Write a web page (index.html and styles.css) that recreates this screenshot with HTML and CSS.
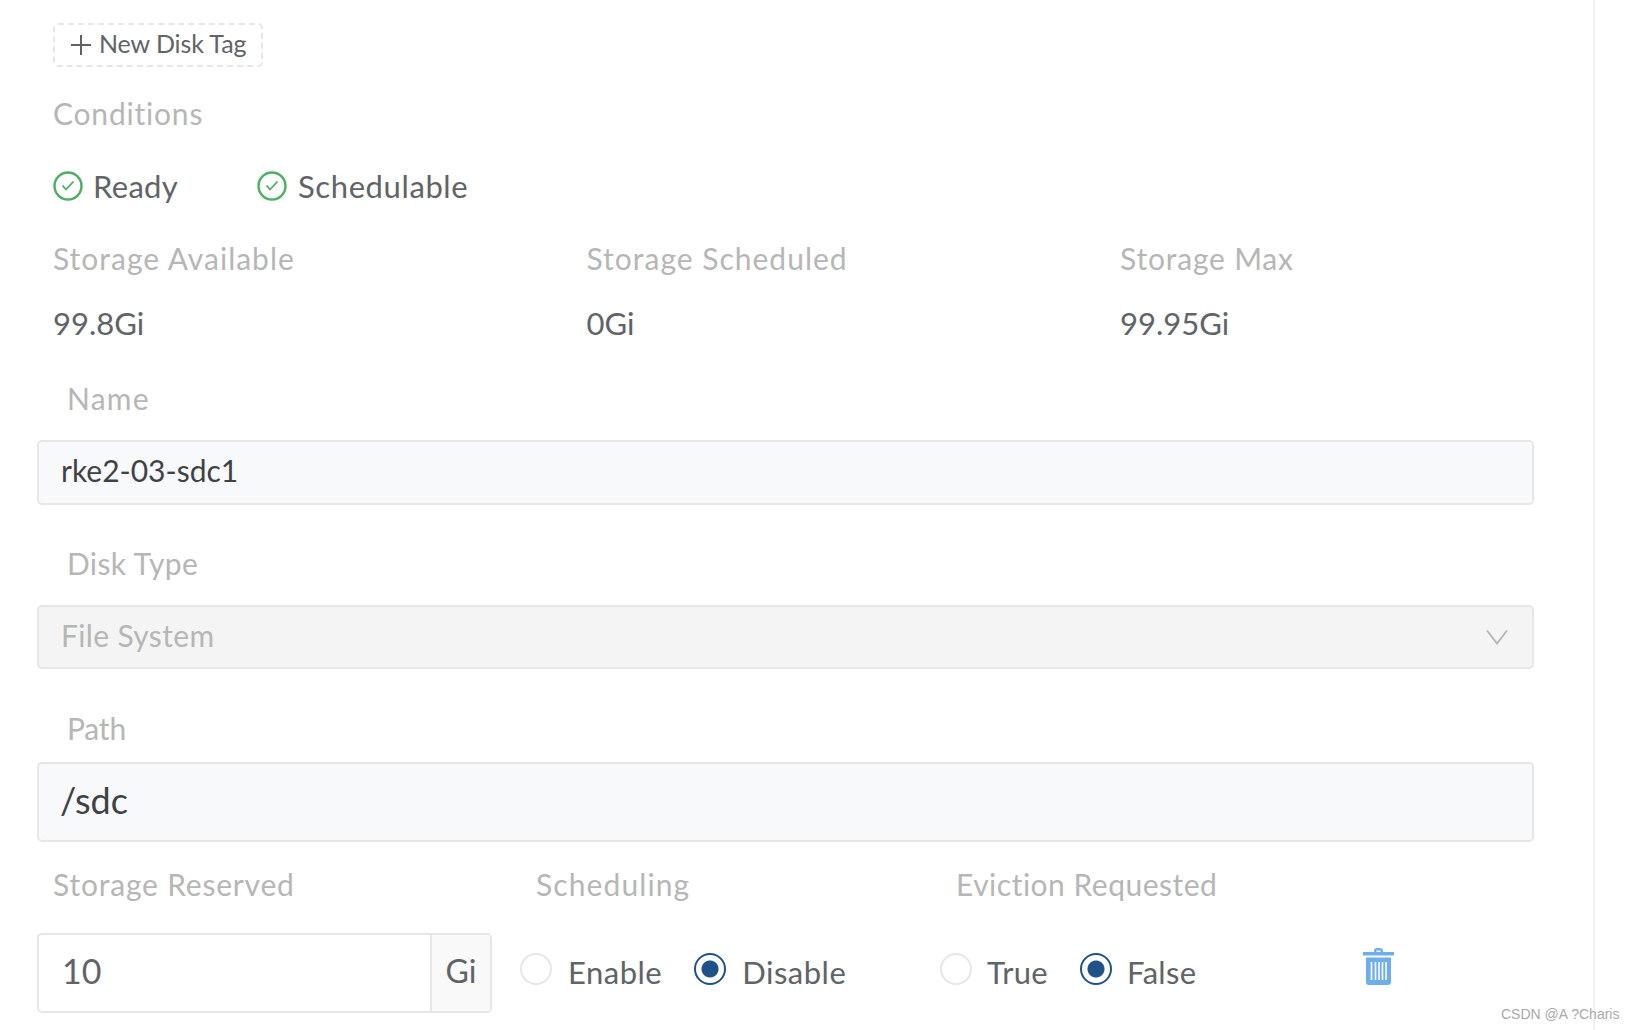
FILE: index.html
```html
<!DOCTYPE html>
<html lang="en">
<head>
<meta charset="utf-8">
<title>Disk settings</title>
<link rel="stylesheet" href="styles.css">
</head>
<body>
<main class="page">
  <div class="inset">
    <button class="tag-btn" type="button">
      <svg class="plus" width="20" height="20" viewBox="0 0 20 20"><path d="M10 0v20M0 10h20" stroke="#5f6266" stroke-width="2" fill="none"/></svg>
      <span>New Disk Tag</span>
    </button>
    <div class="label conditions-label">Conditions</div>
    <div class="conditions">
      <div class="condition">
        <svg width="30" height="30" viewBox="0 0 30 30"><circle cx="15" cy="15" r="13.5" fill="none" stroke="#4caf64" stroke-width="2.400"/><path d="M9.500 14.500l3.500 4 7.500-8" fill="none" stroke="#4caf64" stroke-width="1.800"/></svg>
        <span>Ready</span>
      </div>
      <div class="condition">
        <svg width="30" height="30" viewBox="0 0 30 30"><circle cx="15" cy="15" r="13.5" fill="none" stroke="#4caf64" stroke-width="2.400"/><path d="M9.500 14.500l3.500 4 7.500-8" fill="none" stroke="#4caf64" stroke-width="1.800"/></svg>
        <span class="wide">Schedulable</span>
      </div>
    </div>
    <div class="stats">
      <div class="stat"><div class="label stat-label">Storage Available</div><div class="value">99.8Gi</div></div>
      <div class="stat"><div class="label stat-label">Storage Scheduled</div><div class="value">0Gi</div></div>
      <div class="stat"><div class="label">Storage Max</div><div class="value">99.95Gi</div></div>
    </div>
  </div>

  <div class="field-label name-label">Name</div>
  <div class="control short filled"><span class="control-text">rke2-03-sdc1</span></div>
  <div class="field-label type-label">Disk Type</div>
  <div class="control short disabled">
    <span class="control-text">File System</span>
    <svg width="22" height="16" viewBox="0 0 22 16"><path d="M1 1.500l10 13 10-13" fill="none" stroke="#b4b4b4" stroke-width="1.800"/></svg>
  </div>
  <div class="field-label path-label">Path</div>
  <div class="control tall filled"><span class="control-text">/sdc</span></div>

  <div class="settings">
    <div class="reserved">
      <div class="label">Storage Reserved</div>
      <div class="input-group">
        <div class="number">10</div>
        <div class="unit">Gi</div>
      </div>
    </div>
    <div class="scheduling">
      <div class="label">Scheduling</div>
      <div class="radios">
        <span class="radio"></span><span class="radio-text">Enable</span>
        <span class="radio on"></span><span class="radio-text">Disable</span>
      </div>
    </div>
    <div class="eviction">
      <div class="label">Eviction Requested</div>
      <div class="radios">
        <span class="radio"></span><span class="radio-text">True</span>
        <span class="radio on"></span><span class="radio-text">False</span>
      </div>
    </div>
    <svg class="trash" width="31" height="37" viewBox="0 0 31 37"><path fill="#6eaeee" d="M11 4V3a3 3 0 0 1 3-3h3a3 3 0 0 1 3 3v1h11v3.500H0V4zM13.500 4h4V2.500h-4zM3 9.500h25V34a3 3 0 0 1-3 3H6a3 3 0 0 1-3-3z"/><path stroke="#fff" stroke-width="1.600" d="M8.500 14v18M12.500 14v18M16 14v18M19.500 14v18M23 14v18" fill="none"/></svg>
  </div>
</main>
<div class="watermark">CSDN @A ?Charis</div>
</body>
</html>
```
FILE: styles.css
```css
* { box-sizing: border-box; }
html, body { margin: 0; padding: 0; background: #fff; }
body { height: 1030px; overflow: hidden; position: relative; font-family: Lato, "Open Sans", sans-serif; color: #606367; }
.page { width: 1595px; height: 1030px; padding: 23px 59px 0 37px; border-right: 2px solid #f1f1f1; }
.inset { padding-left: 16px; }
.label, .field-label { font-size: 30px; line-height: 33px; padding-bottom: 3px; color: #b6b6b6; letter-spacing: .8px; }
.stat-label { letter-spacing: 1px; }
.tag-btn { display: flex; align-items: center; gap: 8px; width: 210px; height: 44px; padding: 0 0 0 16px; background: #fff; border: 2px dashed #e6e6e6; border-radius: 5px; font: 25px/1 Lato, sans-serif; color: #606367; }
.tag-btn span { padding-bottom: 4px; letter-spacing: -.1px; }
.conditions-label { margin-top: 30px; }
.conditions { display: flex; margin-top: 35px; gap: 79px; height: 36px; }
.condition { display: flex; align-items: center; gap: 10px; font-size: 31px; letter-spacing: .3px; }
.wide { margin-left: 1px; letter-spacing: .6px; }
.stats { display: grid; grid-template-columns: repeat(3, 533.500px); margin-top: 38px; }
.value { margin-top: 28px; font-size: 31px; line-height: 35px; padding-bottom: 1px; }
.field-label { padding-left: 30px; }
.name-label { margin-top: 40px; letter-spacing: 1.200px; }
.type-label { margin-top: 42px; letter-spacing: .35px; }
.path-label { margin-top: 43px; letter-spacing: -.2px; }
.control { display: flex; align-items: center; justify-content: space-between; margin-top: 22px; padding: 0 24px 0 22px; border: 2px solid #e6e6e6; border-radius: 5px; font-size: 30px; }
.control-text { padding-bottom: 5px; }
.short { height: 65px; }
.tall { height: 80px; margin-top: 14px; font-size: 36px; padding-left: 21px; }
.filled { background: #f8f9fb; color: #3f4245; }
.disabled { height: 64px; background: #f4f4f4; color: #b6b6b6; letter-spacing: .35px; }
.settings { display: flex; position: relative; margin-top: 26px; }
.reserved { width: 455px; }
.reserved .label { padding-left: 16px; }
.input-group { display: flex; height: 80px; margin-top: 29px; border: 2px solid #e6e6e6; border-radius: 5px; font-size: 34px; }
.number { flex: 1; padding-left: 23px; line-height: 71px; }
.unit { width: 60px; border-left: 2px solid #e6e6e6; background: #f9f9f9; font-size: 32px; line-height: 71px; text-align: center; }
.scheduling, .eviction { flex: none; }
.scheduling { margin-left: 28px; width: 420px; }
.scheduling .label { padding-left: 16px; letter-spacing: 1.100px; }
.eviction .label { padding-left: 16px; letter-spacing: .5px; }
.radios { display: flex; align-items: center; height: 31px; margin-top: 50px; font-size: 31px; }
.radio { flex: none; width: 32px; height: 32px; margin-bottom: 2px; border: 2px solid #e6e6e6; border-radius: 50%; background: #fff; }
.radio.on { border-color: #1f5288; background: radial-gradient(circle, #1f5288 0 8px, #fff 9px); }
.radio-text { margin: 4px 32px 0 16px; letter-spacing: .5px; }
.eviction .radio-text { margin: 4px 32px 0 15px; letter-spacing: .3px; }
.trash { position: absolute; left: 1326px; top: 80px; }
.watermark { position: absolute; left: 1501px; top: 1006px; font: 14px/16px "Liberation Sans", sans-serif; color: #a9a9a9; }
```
